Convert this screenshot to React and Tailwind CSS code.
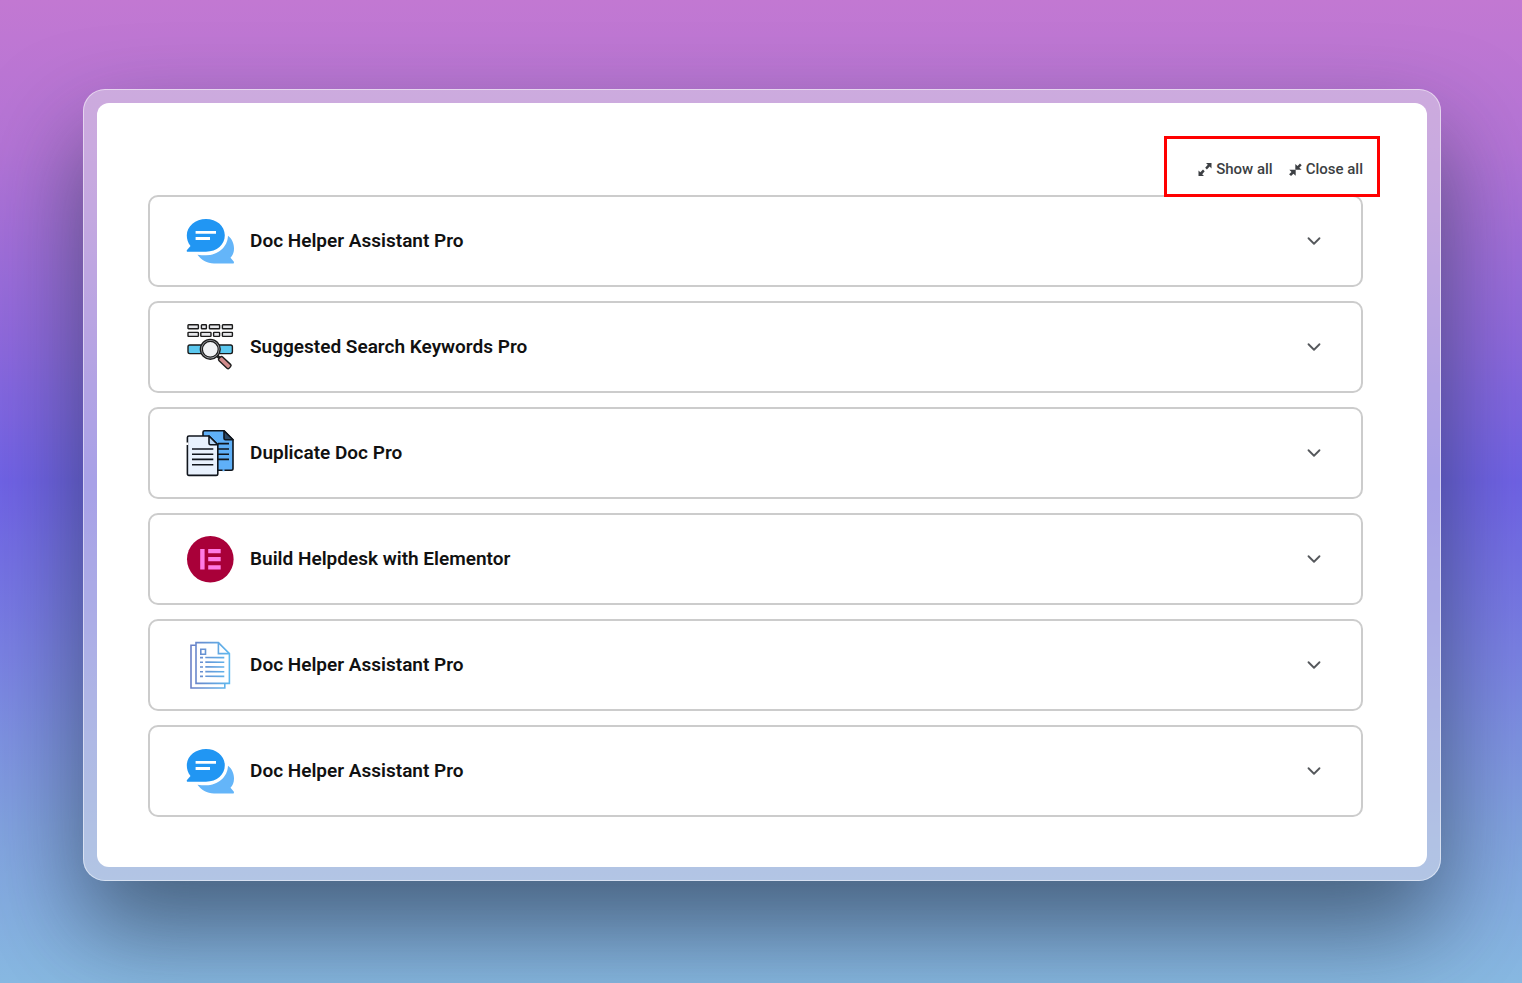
import React, { useState } from 'react';
import { ChevronDown } from 'lucide-react';

const ExpandIcon = () => (
    <svg width="14" height="14" viewBox="0 0 14 14" fill="#3c3f43" aria-hidden="true">
        <path d="M8 0.9H13.5V6.4L11.7 4.6L8.9 7.4L7.2 5.7L9.8 2.7Z" />
        <path d="M6 14H0.5V8.5L2.3 10.3L5 7.6L6.7 9.3L4.2 12.2Z" />
    </svg>
);

const CollapseIcon = () => (
    <svg width="13" height="13" viewBox="0 0 14 14" fill="#3c3f43" aria-hidden="true">
        <path d="M13.6 7.2H6.8V1L9.2 3.1L11.8 0.5L13.7 2.4L11.1 5Z" />
        <path d="M0.4 7.4H7.2V13.6L4.8 11.7L2.2 14L0.1 12.2L2.7 9.6Z" />
    </svg>
);

const ChatIcon = () => (
    <svg className="h-12 w-12 shrink-0" viewBox="0 -0.7 48 48" aria-hidden="true">
        <path fill="#64b5f9" d="M42 18C46 21 48 26 48 31C48 35 46.5 38 44.5 40L47.5 43.5C48.3 44.5 48 45.7 47 45.7H28C21 45.7 15 42 11.5 37C14 37.4 17 37.5 20 37.5C32 37.5 41.5 29.5 42 18Z" />
        <path fill="#2196f3" d="M20 1.3C30.5 1.3 38.8 8.2 38.8 17.6C38.8 27 31 34 20 34H1.8C0.7 34 0.4 33 1 32.2L4.5 28.3C1.8 25 0.8 21.5 0.8 17.6C0.8 8.5 9.5 1.3 20 1.3Z" />
        <path stroke="#fff" strokeWidth="2.8" d="M9.6 14.6H30M9.6 20.8H24" />
    </svg>
);

const KeywordsIcon = () => (
    <svg className="h-12 w-12 shrink-0" viewBox="0 0 48 48" stroke="#1c1c1c" strokeWidth="1.4" aria-hidden="true">
        <g fill="#e6e7ea">
            <rect x="2" y="1.8" width="10.4" height="4" rx="0.6" />
            <rect x="15.4" y="1.8" width="5" height="4" rx="0.6" />
            <rect x="23.4" y="1.8" width="10.2" height="4" rx="0.6" />
            <rect x="36.4" y="1.8" width="10" height="4" rx="0.6" />
            <rect x="2" y="9.4" width="10.4" height="4" rx="0.6" />
            <rect x="14.8" y="9.4" width="10.2" height="4" rx="0.6" />
            <rect x="27.6" y="9.4" width="6" height="4" rx="0.6" />
            <rect x="36.4" y="9.4" width="10" height="4" rx="0.6" />
        </g>
        <rect x="2" y="22" width="44.4" height="8.6" rx="1.8" fill="#5bc8ef" />
        <path d="M31 32.5L34 35.5" strokeWidth="3" />
        <rect x="31.8" y="37" width="14" height="5.2" rx="1.6" fill="#d08c8c" transform="rotate(43 38.8 39.6)" />
        <circle cx="24.3" cy="26.3" r="9.9" fill="#a9abb0" />
        <circle cx="24.3" cy="26.3" r="7.9" fill="#f1f2f4" strokeWidth="1.2" />
    </svg>
);

const DuplicateIcon = () => (
    <svg className="h-12 w-12 shrink-0" viewBox="0 0 48 48" stroke="#10151c" strokeWidth="1.6" strokeLinejoin="round" aria-hidden="true">
        <path fill="#5fb0f8" d="M18.5 1.8H38L47 10.8V39.5Q47 41.2 45.3 41.2H17V3.3Q17 1.8 18.5 1.8Z" />
        <path fill="#2d4a68" d="M38 1.8V9.3Q38 10.8 39.5 10.8H47Z" />
        <path d="M32 14.6H43M32 20H43M32 25.2H43M32 30.4H43" />
        <path stroke="#5fb0f8" strokeWidth="2" d="M36.5 41.2H38.5" />
        <path fill="#e8f1fd" d="M3 7H23L31.8 15.8V44.7Q31.8 46.4 30.1 46.4H3Q1.4 46.4 1.4 44.7V8.6Q1.4 7 3 7Z" />
        <path fill="#b6d4f4" d="M23 7V14.3Q23 15.8 24.5 15.8H31.8Z" />
        <path d="M6 20H27.3M6 25.2H27.3M6 30.4H27.3M6 35.8H27.3" />
        <path stroke="#fff" strokeWidth="2.2" d="M1.2 13.5V16" />
    </svg>
);

const ElementorIcon = () => (
    <svg className="h-12 w-12 shrink-0" viewBox="0 0 48 48" aria-hidden="true">
        <circle cx="24.3" cy="24.2" r="23.3" fill="#a90039" />
        <path fill="#ff7be5" d="M14.2 14H18.6V34.4H14.2ZM22.2 14H34.7V18.2H22.2ZM22.2 22.1H34.7V26.3H22.2ZM22.2 30.2H34.7V34.4H22.2Z" />
    </svg>
);

const DocumentsIcon = () => (
    <svg className="h-12 w-12 shrink-0" viewBox="0 0 48 48" fill="none" stroke="url(#docStroke)" strokeWidth="1.6" aria-hidden="true">
        <defs>
            <linearGradient id="docStroke" gradientUnits="userSpaceOnUse" x1="5" y1="0" x2="44" y2="0">
                <stop offset="0" stopColor="#6a80c6" />
                <stop offset="1" stopColor="#5fb9ef" />
            </linearGradient>
        </defs>
        <path d="M10 4.3H5V47H38.8V42.4" />
        <path d="M10 1.6H32.4L43.4 12.6V42.4H10Z" />
        <path d="M32.4 1.6V12.6H43.4" />
        <path d="M14.8 8.2H19.5V13.2H14.8Z" />
        <path d="M14 16.6H17M14 21.2H17M14 26H17M14 30.7H17M14 35.4H17" />
        <path d="M19.3 16.5L38.3 16.6M19.3 21.1L38.3 21.2M19.3 25.9L38.3 26M19.3 30.6L38.3 30.7M19.3 35.3L38.3 35.4" />
    </svg>
);

const items = [
    { id: 1, title: 'Doc Helper Assistant Pro', Icon: ChatIcon },
    { id: 2, title: 'Suggested Search Keywords Pro', Icon: KeywordsIcon },
    { id: 3, title: 'Duplicate Doc Pro', Icon: DuplicateIcon },
    { id: 4, title: 'Build Helpdesk with Elementor', Icon: ElementorIcon },
    { id: 5, title: 'Doc Helper Assistant Pro', Icon: DocumentsIcon },
    { id: 6, title: 'Doc Helper Assistant Pro', Icon: ChatIcon },
];

const AccordionRow = ({ title, Icon, open, onToggle }) => (
    <button
        type="button"
        aria-expanded={open}
        onClick={onToggle}
        className="flex w-full items-center gap-4 rounded-[10px] border-2 border-[#cccccc] bg-white py-5 pr-9 pl-9 text-left"
    >
        <Icon />
        <span className="flex-1 text-[19px] font-semibold text-[#111111]">{title}</span>
        <ChevronDown className={open ? 'rotate-180 text-[#55585c]' : 'text-[#55585c]'} size={22} strokeWidth={2} />
    </button>
);

const App = () => {
    const [openIds, setOpenIds] = useState([]);

    const toggle = (id) => {
        setOpenIds((prev) => (prev.includes(id) ? prev.filter((i) => i !== id) : [...prev, id]));
    };

    return (
        <div className="min-h-screen bg-[linear-gradient(180deg,#c278d2_0%,#b474d6_15%,#9069dd_34%,#7062e6_49%,#7a80e4_66%,#82a2e0_84%,#88b9e2_100%)] pt-[89px] pr-[81px] pb-[102px] pl-[83px] font-[Roboto,sans-serif]">
            <div className="rounded-[22px] border border-white/50 bg-[#e0e0e8]/50 p-[13px] shadow-[0_48px_96px_rgba(30,50,60,0.6)]">
                <main className="rounded-xl bg-white pt-[54px] pr-16 pb-[50px] pl-[51px]">
                    <div className="mb-[14px] flex justify-end">
                        <div className="relative flex gap-4 text-[15px] leading-6 font-medium text-[#3c3f43]">
                            {/* highlight frame around the two actions */}
                            <div className="pointer-events-none absolute -top-[21px] -right-[17px] -bottom-4 -left-[34px] border-3 border-[#ff0000]" />
                            <button type="button" className="flex items-center gap-1" onClick={() => setOpenIds(items.map((i) => i.id))}>
                                <ExpandIcon />
                                Show all
                            </button>
                            <button type="button" className="flex items-center gap-1" onClick={() => setOpenIds([])}>
                                <CollapseIcon />
                                Close all
                            </button>
                        </div>
                    </div>
                    <div className="flex flex-col gap-[14px]">
                        {items.map((item) => (
                            <AccordionRow
                                key={item.id}
                                title={item.title}
                                Icon={item.Icon}
                                open={openIds.includes(item.id)}
                                onToggle={() => toggle(item.id)}
                            />
                        ))}
                    </div>
                </main>
            </div>
        </div>
    );
};

export default App;
